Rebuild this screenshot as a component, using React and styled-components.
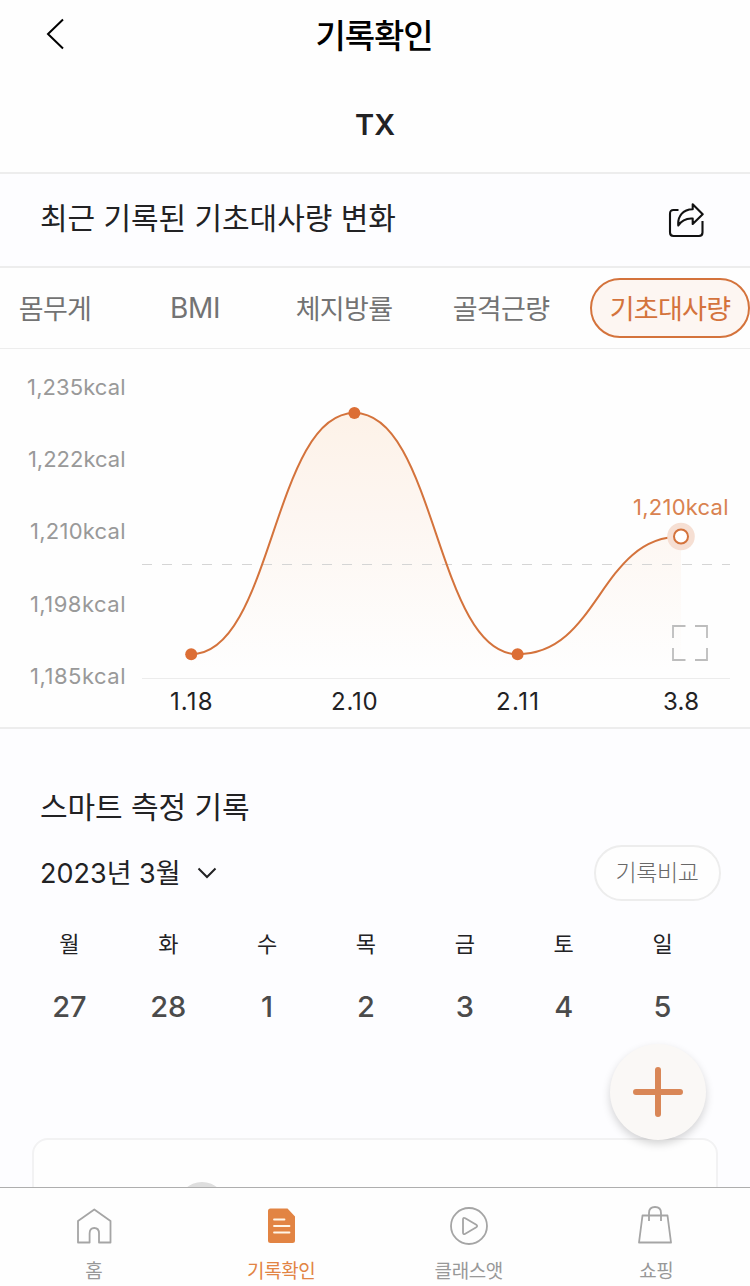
import React from 'react'
import styled, { createGlobalStyle } from 'styled-components'

const tabs = ['몸무게', 'BMI', '체지방률', '골격근량', '기초대사량']

const levels = [
    { label: '1,235kcal', y: 46, width: 98.4 },
    { label: '1,222kcal', y: 118, width: 97.6 },
    { label: '1,210kcal', y: 190, width: 95.4 },
    { label: '1,198kcal', y: 263, width: 95.6 },
    { label: '1,185kcal', y: 335, width: 95.4 },
]

const points = [
    { date: '1.18', x: 191.2, y: 305.2, width: 42.6 },
    { date: '2.10', x: 354.4, y: 64, width: 46.6 },
    { date: '2.11', x: 517.6, y: 305.2, width: 43 },
    { date: '3.8', x: 681, y: 187.5, width: 36 },
]

const days = [
    { name: '월', date: 27 },
    { name: '화', date: 28 },
    { name: '수', date: 1 },
    { name: '목', date: 2 },
    { name: '금', date: 3 },
    { name: '토', date: 4 },
    { name: '일', date: 5 },
]

//Smooth line, flat at every point
const curve = points.reduce((d, p, i) => {
    if (i === 0) return `M${p.x} ${p.y}`
    const prev = points[i - 1]
    const mid = (prev.x + p.x) / 2
    return `${d} C${mid} ${prev.y} ${mid} ${p.y} ${p.x} ${p.y}`
}, '')

function Chart(){
    const last = points[points.length - 1]

    return(
        <ChartSvg viewBox="0 0 750 378">
            <defs>
                <linearGradient id="area" gradientUnits="userSpaceOnUse" x1="0" y1="64" x2="0" y2="320">
                    <stop offset="0" stopColor="#fdf2e8" />
                    <stop offset="0.4" stopColor="#fdf6f1" />
                    <stop offset="1" stopColor="#fefefe" />
                </linearGradient>
            </defs>
            <path d={`${curve} V329 H${points[0].x} V305 Z`} fill="url(#area)" />
            <path d="M142 215.5H730" stroke="#d5d5d5" strokeDasharray="10 10" />
            <path d="M142 329.5H730" stroke="#ececec" />
            <path d={curve} fill="none" stroke="#d4733c" strokeWidth="2" />

            {levels.map((level) => (
                <LevelText key={level.label} x="125.5" y={level.y} textLength={level.width}>{level.label}</LevelText>
            ))}
            {points.map((p) => (
                <DateText key={p.date} x={p.x} y="361" textLength={p.width}>{p.date}</DateText>
            ))}
            {points.slice(0, -1).map((p) => (
                <circle key={p.date} cx={p.x} cy={p.y} r="6" fill="#dc6e35" />
            ))}

            <circle cx={last.x} cy={last.y} r="13.8" fill="#f6dfd3" />
            <circle cx={last.x} cy={last.y} r="7" fill="#fff" stroke="#d4733c" strokeWidth="2" />
            <ValueText x="728.5" y="166" textLength="95.4">1,210kcal</ValueText>

            <path d="M673 289V277H685.5M695 277H707V289M707 299V311H695M685.5 311H673V299" fill="none" stroke="#bdbdbd" strokeWidth="1.8" />
        </ChartSvg>
    )
}

function App(){
    return(
        <Screen>
            <GlobalStyle />
            <Header>
                <BackIcon viewBox="0 0 20 32">
                    <path d="M18 1.5L3 16L18 30.5" />
                </BackIcon>
                <Title>기록확인</Title>
            </Header>
            <UserName>TX</UserName>

            <SectionBar>
                <Heading>최근 기록된 기초대사량 변화</Heading>
                <ShareIcon viewBox="0 0 36 36">
                    <path d="M10.500 8H5.500Q2 8 2 11.500V30.500Q2 34 5.500 34H31Q34.500 34 34.500 30.500V19" />
                    <path d="M24.700 2.200L34.700 12.300L24.700 22V16.500C18 16 13.500 18.500 10.300 23.500C9.500 14 15 7.500 24.700 7.300Z" />
                </ShareIcon>
            </SectionBar>

            <Tabs>
                {tabs.map((tab, i) => (
                    <Tab key={tab} $active={i === 4}>{tab}</Tab>
                ))}
            </Tabs>

            <Chart />

            <Records>
                <Heading>스마트 측정 기록</Heading>
                <MonthRow>
                    <Month>2023년 3월</Month>
                    <DownIcon viewBox="0 0 20 12">
                        <path d="M1.500 1.500L10 10L18.500 1.500" />
                    </DownIcon>
                    <CompareButton>기록비교</CompareButton>
                </MonthRow>
                <Week>
                    {days.map((day) => (
                        <Day key={day.name}>
                            <DayName>{day.name}</DayName>
                            <DayDate>{day.date}</DayDate>
                        </Day>
                    ))}
                </Week>
                <RecordCard>
                    <Avatar />
                </RecordCard>
                <AddButton>
                    <svg viewBox="0 0 50 50" width="50" height="50">
                        <path d="M3 25H47M25 3V47" stroke="#d98757" strokeWidth="6" strokeLinecap="round" />
                    </svg>
                </AddButton>
            </Records>

            <BottomNav>
                <NavItem>
                    <NavIcon viewBox="0 0 40 40">
                        <path d="M4 14L20.300 2.500L36.500 14V35.500H25V26.500Q25 21 20.300 21T15.600 26.500V35.500H4Z" />
                    </NavIcon>
                    홈
                </NavItem>
                <NavItem $active>
                    <NavIcon viewBox="0 0 40 40">
                        <path d="M9 1.500H26.500L34 9.500V33.500Q34 36 31.500 36H9.500Q7 36 7 33.500V4Q7 1.500 9.500 1.500Z" fill="#e28443" stroke="none" />
                        <path d="M13 12.500H23.500M13 19H28.500M13 25.500H28.500" stroke="#fff6e8" strokeLinecap="round" />
                    </NavIcon>
                    기록확인
                </NavItem>
                <NavItem>
                    <NavIcon viewBox="0 0 40 40">
                        <circle cx="20" cy="19" r="18" />
                        <path d="M14 12.500V25.500Q14 28 16.300 26.700L27.300 20.200Q29 19 27.300 17.800L16.300 11.300Q14 10 14 12.500Z" />
                    </NavIcon>
                    클래스앳
                </NavItem>
                <NavItem>
                    <NavIcon viewBox="0 0 40 40">
                        <path d="M6.500 8.500H31.500L35 35.500H3Z" />
                        <path d="M13 14V6Q13 0 19 0T25 6V14" />
                    </NavIcon>
                    쇼핑
                </NavItem>
            </BottomNav>
        </Screen>
    )
}

export default App

const GlobalStyle = createGlobalStyle`
    * {
        box-sizing : border-box;
    }
    body {
        margin : 0;
        background : #fefefe;
        font-family : Inter, "Noto Sans CJK KR", sans-serif;
        color : #222224;
    }
    button {
        font-family : inherit;
    }
`
const Screen = styled.div`
    width : 750px;
    height : 1286px;
    display : flex;
    flex-direction : column;
    overflow : hidden;
`
const Header = styled.header`
    height : 72px;
    flex-shrink : 0;
    display : grid;
    grid-template-columns : 110px 1fr 112px;
    align-items : center;
`
const BackIcon = styled.svg`
    width : 20px;
    height : 32px;
    margin : -4px 0 0 45px;
    fill : none;
    stroke : #000;
    stroke-width : 2;
`
const Title = styled.h1`
    margin : 0;
    text-align : center;
    font-size : 33px;
    font-weight : 500;
    line-height : 48px;
    letter-spacing : -1.1px;
    color : #000;
`
const UserName = styled.div`
    height : 102px;
    flex-shrink : 0;
    border-bottom : 2px solid #ededed;
    text-align : center;
    font-size : 29px;
    font-weight : 600;
    line-height : 106px;
`
const SectionBar = styled.div`
    height : 94px;
    flex-shrink : 0;
    display : flex;
    align-items : center;
    justify-content : space-between;
    padding : 0 46px 0 40px;
    background : #fdfdff;
    border-bottom : 2px solid #ededed;
`
const Heading = styled.h2`
    margin : 0;
    padding-bottom : 4px;
    font-size : 30px;
    font-weight : 400;
    line-height : 42px;
    letter-spacing : -0.05px;
`
const ShareIcon = styled.svg`
    width : 36px;
    height : 36px;
    fill : none;
    stroke : #111;
    stroke-width : 2.1;
    stroke-linejoin : round;
`
const Tabs = styled.nav`
    height : 81px;
    flex-shrink : 0;
    display : grid;
    grid-template-columns : 110px 170px 128px 182px 160px;
    align-items : center;
    border-bottom : 1px solid #ededed;
`
const Tab = styled.button`
    height : 60px;
    padding : 0 0 2px;
    border : 2px solid ${(props) => props.$active ? '#d4733c' : 'transparent'};
    border-radius : 30px;
    background : ${(props) => props.$active ? '#fdf6f2' : 'transparent'};
    color : ${(props) => props.$active ? '#d4733c' : '#737373'};
    font-size : 27px;
    letter-spacing : -0.7px;

    &:nth-child(2) {
        padding-bottom : 0;
        font-size : 28px;
        letter-spacing : -0.3px;
    }
    &:nth-child(4) {
        padding-left : 4px;
    }
`
const ChartSvg = styled.svg`
    width : 750px;
    height : 378px;
    flex-shrink : 0;
    display : block;
`
const LevelText = styled.text`
    font-size : 22px;
    text-anchor : end;
    fill : #999;
`
const DateText = styled.text`
    font-size : 24px;
    text-anchor : middle;
    fill : #222224;
`
const ValueText = styled(LevelText)`
    fill : #d98250;
`
const Records = styled.section`
    position : relative;
    height : 460px;
    flex-shrink : 0;
    padding : 57px 29px 0 40px;
    overflow : hidden;
    background : #fdfdff;
    border-top : 2px solid #ededed;
`
const MonthRow = styled.div`
    height : 56px;
    margin-top : 13px;
    display : flex;
    align-items : center;
`
const Month = styled.span`
    padding-bottom : 4px;
    font-size : 27px;
`
const DownIcon = styled.svg`
    width : 20px;
    height : 12px;
    margin-left : 16px;
    fill : none;
    stroke : #222224;
    stroke-width : 2;
`
const CompareButton = styled.button`
    width : 127px;
    height : 56px;
    margin-left : auto;
    padding : 0 1px 4px 0;
    border : 2px solid #ededed;
    border-radius : 28px;
    background : #fefefe;
    color : #686868;
    font-size : 23px;
    font-weight : 300;
    letter-spacing : -0.4px;
`
const Week = styled.div`
    display : grid;
    grid-template-columns : repeat(7, 1fr);
    margin : 23px 9px 0 -20px;
`
const Day = styled.div`
    display : flex;
    flex-direction : column;
    align-items : center;
`
const DayName = styled.span`
    font-size : 22px;
    line-height : 40px;
`
const DayDate = styled.span`
    margin-top : 22px;
    font-size : 29px;
    font-weight : 500;
    line-height : 42px;
    color : #4b4b4b;
`
const RecordCard = styled.div`
    height : 120px;
    margin : 110px 3px 0 -8px;
    padding : 42px 0 0 144px;
    background : #fefefe;
    border : 2px solid #f2f2f3;
    border-radius : 16px;
`
const Avatar = styled.div`
    width : 48px;
    height : 48px;
    border-radius : 50%;
    background : #dedede;
`
//Floats over the record list
const AddButton = styled.button`
    position : absolute;
    right : 44px;
    bottom : 47px;
    width : 96px;
    height : 96px;
    display : flex;
    align-items : center;
    justify-content : center;
    padding : 0;
    border : none;
    border-radius : 50%;
    background : #faf8f6;
    box-shadow : 0 4px 8px rgba(0,0,0,0.17);
`
const BottomNav = styled.nav`
    flex : 1;
    display : grid;
    grid-template-columns : repeat(4, 1fr);
    background : #fefefe;
    border-top : 1px solid #aeaeae;
`
const NavItem = styled.div`
    display : flex;
    flex-direction : column;
    align-items : center;
    padding-top : 19px;
    color : ${(props) => props.$active ? '#e28443' : '#989898'};
    font-size : 19px;
    line-height : 28px;
    letter-spacing : -0.4px;
`
const NavIcon = styled.svg`
    width : 40px;
    height : 40px;
    margin-bottom : 11px;
    overflow : visible;
    fill : none;
    stroke : #a5a5a5;
    stroke-width : 1.8;
    stroke-linejoin : round;
`
